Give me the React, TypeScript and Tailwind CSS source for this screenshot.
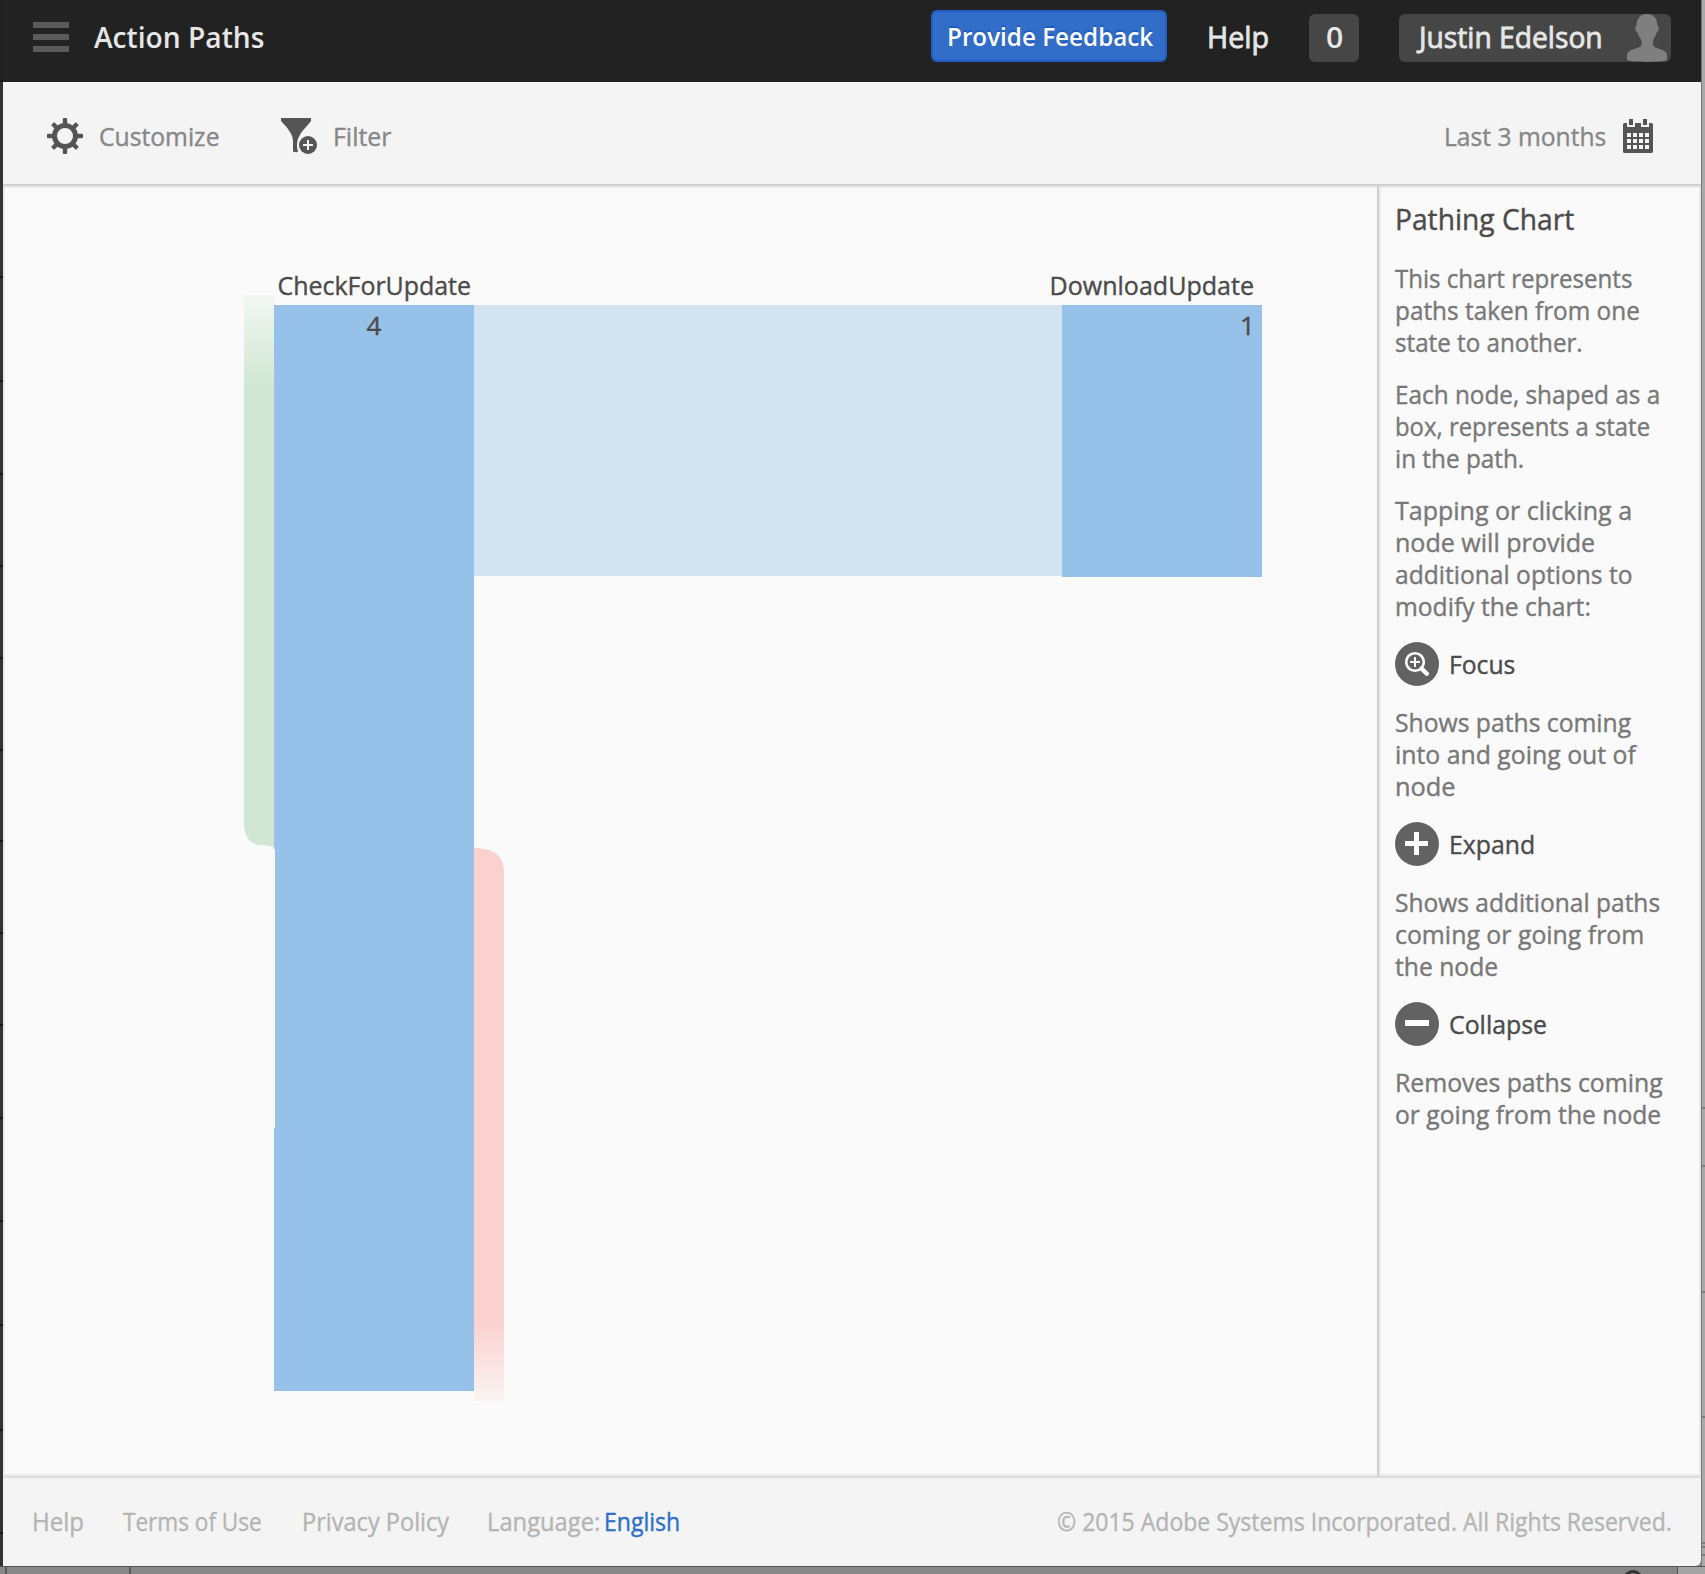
import { useLayoutEffect, useRef, useState } from "react";
import type { ReactNode } from "react";

/** A single line of text condensed horizontally to a given width. */
function Fit({ w, className = "", children }: { w: number; className?: string; children: ReactNode }) {
  const ref = useRef<HTMLSpanElement>(null);
  const [scale, setScale] = useState(1);
  useLayoutEffect(() => {
    if (ref.current) setScale(w / ref.current.offsetWidth);
  }, [w]);
  return (
    <span className={`block whitespace-nowrap ${className}`} style={{ width: w }}>
      <span ref={ref} className="inline-block origin-left" style={{ transform: `scaleX(${scale})` }}>
        {children}
      </span>
    </span>
  );
}

function Gear() {
  return (
    <svg viewBox="0 0 36 36" className="size-9 shrink-0" fill="#555">
      {[0, 45, 90, 135, 180, 225, 270, 315].map((a) => (
        <rect key={a} x="15.800" y={a % 90 ? 0.4 : 0} width="4.400" height="7" rx="1" transform={`rotate(${a} 18 18)`} />
      ))}
      <circle cx="18" cy="18" r="10.500" fill="none" stroke="#555" strokeWidth="5" />
    </svg>
  );
}

function Funnel() {
  return (
    <svg viewBox="0 0 36 36" className="size-9 shrink-0">
      <path d="M0 0H30V3C26 8.500 20.500 13 18.400 18C16.500 21 16 24.500 16 28C16 30.400 16.600 32.400 17.200 33.600C15.600 34.600 13.600 34 12 33.400V23C12 18 9 13.500 5 8.500L0 3Z" fill="#555" />
      <circle cx="27" cy="27" r="9" fill="#555" />
      <path d="M27 22V32M22 27H32" stroke="#f4f4f4" strokeWidth="2" />
    </svg>
  );
}

function Calendar() {
  return (
    <svg viewBox="0 0 30 34" className="h-[34px] w-[30px] shrink-0">
      <path d="M1.500 4H4V8H12V4H18V8H26V4H28.500Q30 4 30 5.500V32.500Q30 34 28.500 34H1.500Q0 34 0 32.500V5.500Q0 4 1.500 4Z" fill="#555" />
      <path d="M6 0H10V6H6ZM20 0H24V6H20Z" fill="#555" />
      {[14, 20, 26].map((y) =>
        [4, 10, 16, 22].map((x) => <rect key={`${x}-${y}`} x={x} y={y} width="4" height="4" fill="#f4f4f4" />),
      )}
    </svg>
  );
}

function Avatar() {
  return (
    <svg viewBox="0 0 40 48" className="h-12 w-10 shrink-0" fill="#7f7f7f">
      <path d="M20 0C26.500 0 30.500 4.500 30.500 12C32.300 12.500 32.300 17.500 29.800 18.300C29 22 26.500 24 26 27.500C25.700 30 26 32.500 28 33.300C32 35 37 36 39.500 39C40.300 41 40 44 40 46C34 48.500 6 48.500 0 46C0 44-.3 41 .5 39C3 36 8 35 12 33.300C14.500 32.500 14.800 30 14.500 27.500C14 24 11 22 10.400 18.300C7.700 17.500 7.700 12.500 9.500 12C9.500 4.500 13.500 0 20 0Z" />
    </svg>
  );
}

function Round({ kind }: { kind: "focus" | "expand" | "collapse" }) {
  return (
    <svg viewBox="0 0 44 44" className="size-11 shrink-0">
      <circle cx="22" cy="22" r="22" fill="#626262" />
      {kind === "focus" && (
        <g fill="none" stroke="#fff">
          <circle cx="20" cy="20" r="8.800" strokeWidth="2.600" />
          <path d="M20 15V25M15 20H25" strokeWidth="2" />
          <path d="M26.500 26.500L31.800 31.800" strokeWidth="4.400" strokeLinecap="round" />
        </g>
      )}
      {kind === "expand" && <path d="M21.500 10V33M10 21.500H33" stroke="#fff" strokeWidth="5" />}
      {kind === "collapse" && <path d="M10 21H34" stroke="#fff" strokeWidth="6" />}
    </svg>
  );
}

type Line = [string, number];

function Para({ lines }: { lines: Line[] }) {
  return (
    <p className="text-[#787878]">
      {lines.map(([t, w]) => (
        <Fit key={t} w={w}>
          {t}
        </Fit>
      ))}
    </p>
  );
}

function Action({ kind, label, w }: { kind: "focus" | "expand" | "collapse"; label: string; w: number }) {
  return (
    <div className="flex items-center gap-2.5 text-[#4b4b4b]">
      <Round kind={kind} />
      <Fit w={w}>{label}</Fit>
    </div>
  );
}

function Chart() {
  return (
    <svg viewBox="5 188 1372 1286" width="1372" height="1286" className="block" fontFamily="Open Sans" fontSize="26">
      <defs>
        <linearGradient id="in" gradientUnits="userSpaceOnUse" x1="0" x2="0" y1="295" y2="385">
          <stop offset="0" stopColor="#f3f7f4" />
          <stop offset="1" stopColor="#d1e7d3" />
        </linearGradient>
        <linearGradient id="out" gradientUnits="userSpaceOnUse" x1="0" x2="0" y1="1319" y2="1401">
          <stop offset="0" stopColor="#fad1cf" />
          <stop offset="1" stopColor="#faf3f3" />
        </linearGradient>
      </defs>
      <path d="M244 295H275V847Q266 845 259 845Q244 843 244 823Z" fill="url(#in)" />
      <path d="M474 848Q504 848 504 872V1401H474Z" fill="url(#out)" />
      <path d="M274 305H474V1391H274V1128H275V849H274Z" fill="#96c1e9" />
      <rect x="474" y="305" width="588" height="271" fill="#d4e3f2" />
      <rect x="1062" y="305" width="200" height="272" fill="#96c1e9" />
      <g fill="#4b4b4b" stroke="#4b4b4b" strokeWidth="0.4">
        <text x="277.500" y="295" textLength="193.500" lengthAdjust="spacingAndGlyphs">CheckForUpdate</text>
        <text x="1049.500" y="295" textLength="204.500" lengthAdjust="spacingAndGlyphs">DownloadUpdate</text>
        <text x="374" y="335" textAnchor="middle">4</text>
        <text x="1240" y="335">1</text>
      </g>
    </svg>
  );
}

const LEFT_TICKS = [80, 276, 380, 473, 565, 657, 749, 840, 932, 1024, 1117, 1220, 1324, 1429, 1532];
const RIGHT_TICKS = [1107, 1165, 1291, 1416, 1542, 1546, 1554];

export default function App() {
  return (
    <div className="flex h-[1574px] w-[1705px] flex-col overflow-hidden bg-[#888787] font-['Open_Sans',sans-serif] text-[26px] leading-8">
      <div className="flex h-[1566px]">
        <div className="relative w-[3px] bg-[#333335]">
          <div className="h-[82px] bg-[#202020]" />
          {LEFT_TICKS.map((y) => (
            <i key={y} className="absolute left-0 h-0.5 w-[3px] bg-[#151515]" style={{ top: y }} />
          ))}
        </div>

        <div className="flex w-[1698px] flex-col overflow-hidden rounded-br-[6px] bg-[#f4f4f4]">
          <header className="flex h-[82px] shrink-0 items-start bg-[#222222] text-[28.5px] text-[#e6e6e6]">
            <div className="mt-[22px] ml-[30px] flex w-9 flex-col gap-1.5">
              <div className="h-1.5 bg-[#5b5b5b]" />
              <div className="h-1.5 bg-[#5b5b5b]" />
              <div className="h-1.5 bg-[#5b5b5b]" />
            </div>
            <h1 className="mt-[21px] ml-[24.5px] font-semibold">
              <Fit w={170}>Action Paths</Fit>
            </h1>
            <button className="mt-2.5 ml-auto h-[52px] w-[236px] rounded-[6px] border-2 border-[#1f5dc2] bg-[#326ec8] pl-3.5 text-left text-[26px] font-semibold text-white [text-shadow:0_-2px_0_#1f5dc2]">
              <Fit w={206}>Provide Feedback</Fit>
            </button>
            <a className="mt-[21px] ml-[40px]">
              <Fit w={62.5} className="[-webkit-text-stroke:0.8px_#e6e6e6]">Help</Fit>
            </a>
            <div className="mt-3.5 ml-[39.5px] flex h-12 w-[50px] justify-center rounded-[6px] bg-[#464646] pt-[7px] font-semibold">
              <Fit w={17}>0</Fit>
            </div>
            <div className="mt-3.5 mr-[30px] ml-10 flex h-12 w-[272px] justify-between rounded-[6px] bg-[#464646] pr-1 pl-5">
              <Fit w={184} className="pt-[7px] [-webkit-text-stroke:0.8px_#e6e6e6]">Justin Edelson</Fit>
              <Avatar />
            </div>
          </header>

          <nav className="flex h-[104px] shrink-0 items-center border-b-2 border-[#d0d0d0] pt-1.5 pr-12 pl-11 text-[#888888] [-webkit-text-stroke:0.4px_#888888]">
            <div className="flex items-center gap-4">
              <Gear />
              <Fit w={120.5}>Customize</Fit>
            </div>
            <div className="ml-[61.5px] flex items-center gap-4">
              <Funnel />
              <Fit w={58.5}>Filter</Fit>
            </div>
            <div className="ml-auto flex items-center gap-[17px]">
              <Fit w={162}>Last 3 months</Fit>
              <Calendar />
            </div>
          </nav>

          <main className="flex h-[1290px] shrink-0 border-2 border-[#eaeaea] bg-[#fafafa]">
            <section className="w-[1372px] shrink-0">
              <Chart />
            </section>
            <aside className="-my-0.5 grow border-l-2 border-[#cfcfcf]">
              <div className="my-0.5 flex h-[1286px] flex-col gap-5 border-l-2 border-[#eaeaea] pt-[15px] pl-3.5 [-webkit-text-stroke:0.4px_currentColor]">
                <h2 className="mb-[7px] text-[28.5px] text-[#4b4b4b]">
                  <Fit w={179}>Pathing Chart</Fit>
                </h2>
                <Para lines={[["This chart represents", 237], ["paths taken from one", 244.5], ["state to another.", 188]]} />
                <Para lines={[["Each node, shaped as a", 265.5], ["box, represents a state", 255.5], ["in the path.", 129]]} />
                <Para
                  lines={[
                    ["Tapping or clicking a", 237.5],
                    ["node will provide", 200.5],
                    ["additional options to", 237.5],
                    ["modify the chart:", 196],
                  ]}
                />
                <Action kind="focus" label="Focus" w={66.5} />
                <Para lines={[["Shows paths coming", 236.5], ["into and going out of", 240.5], ["node", 60.500]]} />
                <Action kind="expand" label="Expand" w={86} />
                <Para lines={[["Shows additional paths", 265], ["coming or going from", 249.5], ["the node", 103.5]]} />
                <Action kind="collapse" label="Collapse" w={98.5} />
                <Para lines={[["Removes paths coming", 268], ["or going from the node", 266.5]]} />
              </div>
            </aside>
          </main>

          <footer className="flex h-[90px] shrink-0 items-start border-t-2 border-[#dcdcdc] pt-[27px] pr-[29px] pl-[29px] text-[25px] text-[#b5b5b5] [-webkit-text-stroke:0.4px_currentColor]">
            <Fit w={52}>Help</Fit>
            <Fit w={139} className="ml-[39px]">Terms of Use</Fit>
            <Fit w={147} className="ml-[39.5px]">Privacy Policy</Fit>
            <Fit w={113} className="ml-[38.5px]">Language:</Fit>
            <Fit w={76.5} className="ml-1 text-[#2d70c9]">English</Fit>
            <Fit w={615} className="ml-auto">© 2015 Adobe Systems Incorporated. All Rights Reserved.</Fit>
          </footer>
        </div>

        <div className="relative w-1 border-l border-[#777] bg-[#aaa9a9]">
          {RIGHT_TICKS.map((y) => (
            <i key={y} className="absolute left-0 h-0.5 w-[3px] bg-[#7c7c7c]" style={{ top: y }} />
          ))}
        </div>
      </div>
      <div className="flex h-2 overflow-hidden border-t border-[#555]">
        <div className="ml-[5px] h-2 w-[126px] shrink-0 border-x-2 border-[#5c5c5c]" />
        <div className="mt-[3px] ml-[1492px] h-[20px] w-[20px] shrink-0 rounded-full border-[3px] border-[#333]" />
        <div className="ml-[34px] h-2 grow border-l border-[#555] bg-[#a3a3a3]" />
      </div>
    </div>
  );
}
